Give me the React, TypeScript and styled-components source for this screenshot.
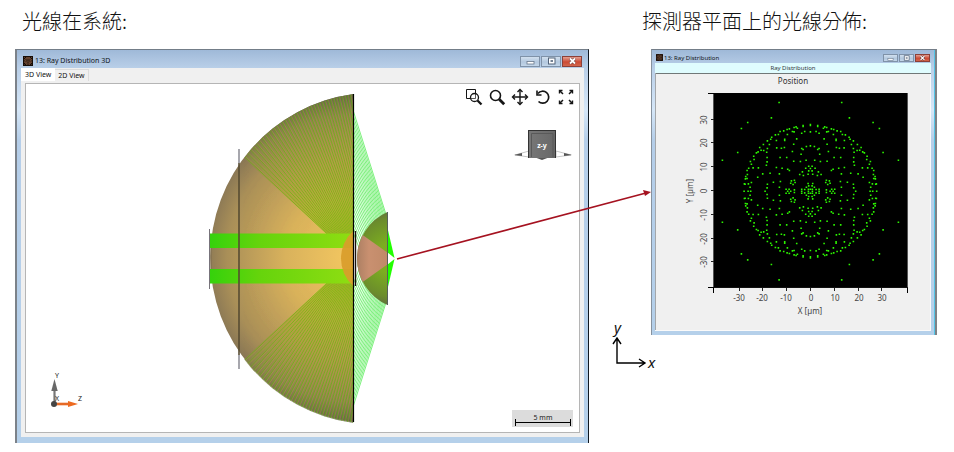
import React from "react";
import styled, { createGlobalStyle, css } from "styled-components";

const Global = createGlobalStyle`
  * { box-sizing: border-box; }
  body { margin: 0; background: #fff; font-family: "Noto Sans", "Open Sans", sans-serif; }
  svg { display: block; }
  text { font-family: "Noto Sans", "Open Sans", sans-serif; }
`;

const Page = styled.main`
  position: relative;
  display: grid;
  grid-template-columns: 574fr 295fr;
  column-gap: 53px;
  align-items: start;
  padding: 7px 17px 9px 15px;
`;

const Figure = styled.section`
  display: flex;
  flex-direction: column;
  min-width: 0;
`;

const Heading = styled.h2<{ $indent?: boolean }>`
  margin: 0;
  padding-left: ${(p) => (p.$indent ? "7px" : "0")};
  height: 42px;
  font: 300 20px/28px "Noto Sans CJK TC", sans-serif;
  color: #111;
  white-space: nowrap;
`;

const Window = styled.div<{ $small?: boolean }>`
  display: flex;
  flex-direction: column;
  border-top: 1px solid #737d88;
  background: linear-gradient(#9fb9d8 0, #b9cfe8 18px, #d6e7f8 60px, #b5cee9 90px, #b5d0ea 100%);
  ${(p) =>
    p.$small
      ? css`
          margin-left: 9px;
          border-left: 1px solid #87929e;
          border-right: 2px solid #7d8287;
          padding: 0 4px 4px 3px;
          box-shadow: inset -1px 0 #55c6e8;
        `
      : css`
          border-left: 2px solid #7c8289;
          border-right: 1px solid #101820;
          padding: 0 4px 6px;
        `}
`;

const TitleBar = styled.header<{ $small?: boolean }>`
  display: flex;
  align-items: center;
  gap: ${(p) => (p.$small ? "1px" : "2px")};
  height: ${(p) => (p.$small ? "13px" : "18px")};
  padding: ${(p) => (p.$small ? "2px 1px 0" : "4px 2px 0")};
  margin: 0;
`;

const Title = styled.h3<{ $small?: boolean }>`
  flex: 1;
  margin: 0;
  font-size: ${(p) => (p.$small ? "6px" : "7px")};
  line-height: 10px;
  font-weight: 400;
  color: #101418;
  white-space: nowrap;
`;

const WindowButtons = styled.div`
  display: flex;
  gap: 1px;
`;

const WindowButton = styled.button<{ $small?: boolean; $close?: boolean }>`
  display: grid;
  place-items: center;
  width: ${(p) => (p.$small ? "15px" : "20px")};
  height: ${(p) => (p.$small ? "8px" : "11px")};
  padding: 0;
  border: 1px solid ${(p) => (p.$close ? "#8c4038" : "#7f92a8")};
  background: ${(p) =>
    p.$close
      ? "linear-gradient(#e3a092, #cc4a34 55%, #d2664c)"
      : "linear-gradient(#d2e0ef, #b3c8de 55%, #c3d6e9)"};
`;

const Panel = styled.div`
  background: #f0f0f0;
`;

const Tabs = styled.div`
  display: flex;
  align-items: flex-end;
  height: 13px;
`;

const Tab = styled.button<{ $active?: boolean }>`
  height: ${(p) => (p.$active ? "13px" : "12px")};
  padding: ${(p) => (p.$active ? "0 4px" : "0 3px")};
  border: 0 solid #dcdcdc;
  border-width: ${(p) => (p.$active ? "0" : "1px 1px 0 0")};
  background: ${(p) => (p.$active ? "#fff" : "#f0f0f0")};
  color: #111;
  font: 7px/11px "Noto Sans", sans-serif;
`;

const Canvas = styled.div`
  position: relative;
  margin: 0;
  border: 1px solid #b5b5b5;
  background: #fff;
`;

const TabBody = styled.div`
  padding: 2px 4px 4px;
`;

const Toolbar = styled.div`
  position: absolute;
  top: 4px;
  right: 4px;
  display: flex;
  gap: 5px;
`;

const Tool = styled.button`
  width: 18px;
  height: 18px;
  padding: 0;
  border: 0;
  background: none;
`;

const Caption = styled.div`
  height: 10px;
  background: #dffcfe;
  color: #30383c;
  font-size: 6px;
  line-height: 10px;
  text-align: center;
`;

const Drawing = styled.svg`
  width: 100%;
  height: auto;
`;

const Annotation = styled.svg`
  position: absolute;
  top: 0;
  left: 0;
  width: 100%;
  height: auto;
  pointer-events: none;
`;

function AppIcon({ size }: { size: number }) {
  return (
    <svg width={size} height={size} viewBox="0 0 10 10">
      <rect width="10" height="10" fill="#160d08" />
      <path
        d="M1 1 9 9M9 1 1 9M5 1 9 5 5 9 1 5zM3 1 9 7M1 3 7 9M7 1 1 7M9 3 3 9"
        stroke="#b87a58"
        strokeWidth="0.7"
        strokeDasharray="1 0.8"
        fill="none"
      />
    </svg>
  );
}

function Controls({ small }: { small?: boolean }) {
  const w = small ? 7 : 9;
  return (
    <WindowButtons>
      <WindowButton $small={small} aria-label="Minimize">
        <svg width={w} height={w - 1} viewBox="0 0 9 8">
          <rect x="1" y="4.5" width="7" height="2.5" fill="#fff" stroke="#68788c" strokeWidth=".8" />
        </svg>
      </WindowButton>
      <WindowButton $small={small} aria-label="Maximize">
        <svg width={w} height={w - 1} viewBox="0 0 9 8">
          <rect x="1.5" y="1" width="6.5" height="6" fill="#fff" stroke="#53647a" />
          <rect x="3.5" y="3.2" width="2.5" height="1.6" fill="#53647a" />
        </svg>
      </WindowButton>
      <WindowButton $small={small} $close aria-label="Close">
        <svg width={w} height={w - 1} viewBox="0 0 9 8">
          <path d="M2 1.5 7 6.5M7 1.5 2 6.5" stroke="#6b3a38" strokeWidth="3" />
          <path d="M2 1.5 7 6.5M7 1.5 2 6.5" stroke="#fff" strokeWidth="1.8" />
        </svg>
      </WindowButton>
    </WindowButtons>
  );
}

const tools = [
  {
    label: "Zoom to region",
    art: (
      <>
        <path d="M5 10.5H1.5V1.5h9V5" strokeWidth="1" />
        <path d="M5 10.5h5.5V5" strokeWidth=".7" />
        <circle cx="9.5" cy="9.5" r="4" strokeWidth="1.3" />
        <path d="m12.5 12.500 4 4" strokeWidth="2.3" />
      </>
    ),
  },
  {
    label: "Zoom",
    art: (
      <>
        <circle cx="7.5" cy="7.5" r="5" strokeWidth="1.6" />
        <path d="m11.200 11.200 5 5" strokeWidth="2.8" />
      </>
    ),
  },
  {
    label: "Pan",
    art: (
      <>
        <path d="M9 2v14M2 9h14" strokeWidth="1.4" />
        <path d="M6.500 4 9 1.500 11.500 4M6.500 14 9 16.500 11.500 14M4 6.500 1.500 9 4 11.500M14 6.500 16.500 9 14 11.500" strokeWidth="1.4" />
      </>
    ),
  },
  {
    label: "Reset rotation",
    art: (
      <>
        <path d="M4 5.500A6 6 0 1 1 4.500 13.500" strokeWidth="1.7" />
        <path d="M3 2.500v4.500h4.500" strokeWidth="1.6" />
      </>
    ),
  },
  {
    label: "Fit to window",
    art: (
      <>
        <path d="m3 3 3 3M15 3 12 6M3 15 6 12M15 15 12 12" strokeWidth="1.5" />
        <path d="M2.500 5.500V2.500h3M12.500 2.500h3v3M2.500 12.500v3h3M12.500 15.500h3v-3" strokeWidth="1.4" />
      </>
    ),
  },
];

const AXIS_Y = 258;

function innerRays() {
  const out: string[] = [];
  const n = 38;
  for (let i = 0; i <= n; i++) {
    const t = i / n;
    const x = 245 + (353 - 245) * t;
    const dy = Math.sqrt(165.5 ** 2 - (376 - x) ** 2);
    out.push(`M${x.toFixed(1)} ${(AXIS_Y - dy).toFixed(1)}L${(327 + 50 * t).toFixed(1)} 234`);
  }
  return out.join("");
}

function outerRays() {
  const out: string[] = [];
  const n = 26;
  for (let i = 0; i <= n; i++) {
    const t = i / n;
    const y0 = 110 + 122 * t;
    const x1 = 385 - 27 * t;
    const y1 = AXIS_Y - Math.sqrt(Math.max(0, 50.7 ** 2 - (407.2 - x1) ** 2));
    out.push(`M353 ${y0.toFixed(1)}L${(x1 + 1).toFixed(1)} ${(y1 + 2).toFixed(1)}`);
  }
  return out.join("");
}

/* One half of the ray bundle; the lower half is its reflection in the optical axis. */
function HalfBundle() {
  return (
    <>
      <g clipPath="url(#bigLens)">
        <path d="M327 234 245 159 200 80h153v154z" fill="url(#fan)" />
        <path d={innerRays()} stroke="#5cba08" strokeWidth="0.8" opacity="0.7" />
        <path d={innerRays()} stroke="#cf8468" strokeWidth="0.8" opacity="0.4" transform="translate(1 0)" />
      </g>
      <rect x="210" y="233.5" width="143" height="14.5" fill="url(#beam)" />
      <path d={outerRays()} stroke="#25e625" strokeWidth="0.6" fill="none" />
      <path d="M387 226 394.5 258 387 252z" fill="#22ff00" />
    </>
  );
}

function RayScene() {
  return (
    <Drawing viewBox="26 84 553 348" role="img" aria-label="Ray Distribution 3D">
      <defs>
        <clipPath id="bigLens">
          <path d="M353.5 94A165.5 165.5 0 0 0 353.5 422z" />
        </clipPath>
        <clipPath id="smallLens">
          <path d="M387.5 212A50.7 50.7 0 0 0 387.5 305z" />
        </clipPath>
        <radialGradient id="glass" gradientUnits="userSpaceOnUse" cx="353" cy="258" r="168">
          <stop offset="0" stopColor="#f5c860" />
          <stop offset=".4" stopColor="#d9b25c" />
          <stop offset=".75" stopColor="#a98f58" />
          <stop offset="1" stopColor="#6b6052" />
        </radialGradient>
        <radialGradient id="fan" gradientUnits="userSpaceOnUse" cx="353" cy="258" r="168">
          <stop offset=".15" stopColor="#98cc08" stopOpacity=".95" />
          <stop offset=".35" stopColor="#a8b922" stopOpacity=".8" />
          <stop offset=".6" stopColor="#a7a23a" stopOpacity=".75" />
          <stop offset=".85" stopColor="#8c8c46" stopOpacity=".7" />
          <stop offset="1" stopColor="#55603f" stopOpacity=".8" />
        </radialGradient>
        <linearGradient id="beam">
          <stop offset="0" stopColor="#35d20c" />
          <stop offset=".35" stopColor="#66d40c" />
          <stop offset="1" stopColor="#8fdd12" />
        </linearGradient>
        <radialGradient id="smallGreen" gradientUnits="userSpaceOnUse" cx="392" cy="258" r="52">
          <stop offset=".3" stopColor="#7cad20" />
          <stop offset=".75" stopColor="#6b8c2c" />
          <stop offset="1" stopColor="#5a6344" />
        </radialGradient>
        <linearGradient id="salmon">
          <stop offset="0" stopColor="#9c765c" />
          <stop offset=".5" stopColor="#c99070" />
          <stop offset="1" stopColor="#c08a68" />
        </linearGradient>
        <linearGradient id="cube">
          <stop offset="0" stopColor="#777" />
          <stop offset="1" stopColor="#686868" />
        </linearGradient>
      </defs>

      <path d="M353.5 94A165.5 165.5 0 0 0 353.5 422z" fill="url(#glass)" />
      <HalfBundle />
      <g transform="matrix(1 0 0 -1 0 517)">
        <HalfBundle />
      </g>
      <path d="M353 231A37.5 37.5 0 0 0 353 286z" fill="#d99c2b" opacity=".92" />
      <path d="M239 149V163M239 355V369" stroke="#92929a" strokeWidth="1.6" />
      <path d="M239 163V355" stroke="#574c32" strokeWidth="1.6" />
      <path d="M209.5 229V289" stroke="#77737b" />
      <path d="M211 248v21" stroke="#7c6d50" />
      <path d="M353.5 94V422" stroke="#000" strokeWidth="1.2" />
      <path d="M355.5 231V286" stroke="#1b120c" strokeWidth="1.4" />

      <g clipPath="url(#smallLens)">
        <rect x="355" y="210" width="33" height="97" fill="url(#smallGreen)" />
        <path d="M350 226 388 253v11L350 291z" fill="url(#salmon)" />
      </g>
      <path d="M387.5 212V305" stroke="#55605a" strokeWidth="1" />

      <g>
        <path d="m515 155 14-4v6zM571 155l-15-4v6z" fill="#fff" stroke="#aaa" strokeWidth=".7" />
        <path d="m514 155 8-2v3zM572 155l-8-2v3zM534 157h16l-8 3z" fill="#555" />
        <path d="M528 130h28v28h-28z" fill="#333" />
        <rect x="529" y="131" width="26" height="27" fill="url(#cube)" />
        <path d="M531.5 157V133.5H553V157" fill="none" stroke="#595959" />
        <text x="542" y="148" fontSize="7" fontWeight="700" textAnchor="middle" fill="#fff">z-y</text>
      </g>

      <g>
        <path d="M54.5 403V388" stroke="#777" strokeWidth="2.2" />
        <path d="m54.500 379 3.200 12h-6.400z" fill="#686868" />
        <path d="M54 404H69" stroke="#e66a26" strokeWidth="2.6" />
        <path d="m78 404-10-3v6z" fill="#ed6a20" />
        <circle cx="54" cy="404" r="3" fill="#444" />
        <text x="55" y="378" fontSize="7" fill="#222">Y</text>
        <text x="55" y="401" fontSize="7" fill="#222">X</text>
        <text x="78" y="401" fontSize="7" fill="#222">Z</text>
      </g>

      <g>
        <rect x="512" y="410" width="61" height="17" fill="#dcdcdc" />
        <path d="M515.5 419v7M570.5 419v7M515 422.5h56" stroke="#000" />
        <text x="543" y="420" fontSize="7" textAnchor="middle" fill="#222">5 mm</text>
      </g>
    </Drawing>
  );
}

/* Ray hits of the upper right quadrant, in thirds of a plot unit from the centre. */
const hits: [number, number][] = [
  [94, 266], [117, 220], [188, 206], [207, 188], [218, 116], [264, 93],
  [0, 197], [22, 197], [0, 200], [22, 194], [43, 193], [39, 189], [49, 191], [63, 187], [70, 185], [80, 181],
  [91, 179], [96, 170], [105, 169], [116, 162], [119, 156], [129, 151], [123, 140], [141, 140],
  [152, 131], [148, 123], [140, 122], [157, 118], [162, 115], [170, 105], [169, 95], [180, 89],
  [177, 81], [185, 69], [190, 62], [189, 50], [194, 44], [195, 37], [190, 38], [196, 21],
  [186, 22], [199, 0], [187, 0], [179, 0], [181, 12], [177, 26], [198, 22],
  [0, 178], [17, 179], [26, 174], [49, 178], [54, 179], [69, 170], [77, 156], [77, 152], [41, 157],
  [102, 152], [50, 141], [129, 128], [78, 131], [87, 129], [101, 130], [0, 136], [12, 134],
  [22, 125], [26, 128], [54, 119], [28, 111], [131, 117], [71, 101], [91, 101], [130, 101],
  [130, 88], [132, 78], [13, 93], [30, 89], [50, 90], [85, 69], [102, 71], [68, 66], [63, 62],
  [5, 75], [5, 61], [0, 68], [14, 69], [24, 58], [32, 50], [21, 47], [7, 51],
  [143, 52], [121, 54], [93, 52], [156, 70], [172, 70], [158, 42], [48, 33], [57, 31],
  [46, 26], [59, 24], [52, 20], [90, 29], [111, 27], [129, 21], [130, 10], [136, 0],
  [93, 12], [64, 6], [73, 6], [68, 0], [59, 0], [48, 4], [26, 6], [26, 0],
  [7, 23], [12, 12], [6, 6], [0, 6], [6, 0], [17, 5], [5, 16],
];

function hitPath() {
  const out: string[] = [];
  hits.forEach(([a, b]) => {
    const xs = a ? [a, -a] : [0];
    const ys = b ? [b, -b] : [0];
    xs.forEach((x) =>
      ys.forEach((y) => {
        const px = (809.6 + x / 3).toFixed(1);
        const py = (190.4 - y / 3).toFixed(1);
        out.push(`M${px} ${py}h1.600v1.600h-1.600z`);
      }),
    );
  });
  return out.join("");
}

const ticks = [-30, -20, -10, 0, 10, 20, 30];

function SpotPlot() {
  return (
    <Drawing viewBox="655 73 276 258" role="img" aria-label="Position">
      <path d="M655 73.5H931" stroke="#707878" />
      <path d="M655.5 73V330" stroke="#a4a7aa" />
      <path d="M655 330.5H931M930.5 74V331" stroke="#fafafa" />
      <text x="793" y="84" fontSize="8" textAnchor="middle" fill="#333">Position</text>
      <rect x="713" y="93" width="195" height="195" fill="#000" />
      <path d="M713.5 93V293M907.5 93V288" stroke="#555" />
      <path d="M713 287.5H908" stroke="#111" />
      <path d="M708 93.5h6M708 287.5h6M713.5 288v5M907.5 288v5" stroke="#000" />
      {ticks.map((t) => (
        <g key={t} fontSize="8" fill="#444" textAnchor="middle">
          <path d={`M${Math.round(810 + t * 2.38)}.5 288v3M711 ${Math.round(190 - t * 2.38)}.5h3`} stroke="#222" />
          <text x={Math.round(811 + t * 2.38) - (t < 0 ? 1 : 0)} y="301">{t}</text>
          <text transform={`translate(707 ${Math.round(191 - t * 2.38)}) rotate(-90)`}>{t}</text>
        </g>
      ))}
      <text x="810" y="314" fontSize="8" textAnchor="middle" fill="#444">X [µm]</text>
      <text transform="translate(693 191) rotate(-90)" fontSize="8" textAnchor="middle" fill="#444">Y [µm]</text>
      <path d={hitPath()} fill="#2cf500" />
    </Drawing>
  );
}

export default function App() {
  return (
    <>
      <Global />
      <Page>
        <Figure>
          <Heading $indent>光線在系統:</Heading>
          <Window>
            <TitleBar>
              <AppIcon size={10} />
              <Title>13: Ray Distribution 3D</Title>
              <Controls />
            </TitleBar>
            <Panel>
              <Tabs role="tablist">
                <Tab role="tab" aria-selected="true" $active>3D View</Tab>
                <Tab role="tab" aria-selected="false">2D View</Tab>
              </Tabs>
              <TabBody>
                <Canvas>
                  <RayScene />
                  <Toolbar>
                    {tools.map((t) => (
                      <Tool key={t.label} aria-label={t.label}>
                        <svg width="18" height="18" viewBox="0 0 18 18" fill="none" stroke="#151515">
                          {t.art}
                        </svg>
                      </Tool>
                    ))}
                  </Toolbar>
                </Canvas>
              </TabBody>
            </Panel>
          </Window>
        </Figure>

        <Figure>
          <Heading>探測器平面上的光線分佈:</Heading>
          <Window $small>
            <TitleBar $small>
              <AppIcon size={7} />
              <Title $small>13: Ray Distribution</Title>
              <Controls small />
            </TitleBar>
            <Panel>
              <Caption>Ray Distribution</Caption>
              <SpotPlot />
            </Panel>
          </Window>
        </Figure>

        <Annotation viewBox="0 0 954 452" aria-hidden="true">
          <path d="M397 259 646 193" stroke="#a51220" strokeWidth="1.6" />
          <path d="m651 192-8-2 2 6z" fill="#a51220" />
          <path d="M617 339v24H644M613 344l4-6 4 6M639 359l6 4-6 4" fill="none" stroke="#000" strokeWidth="1.4" />
          <text x="614" y="333" fontSize="15" fontStyle="italic" fill="#111">y</text>
          <text x="648" y="368" fontSize="15" fontStyle="italic" fill="#111">x</text>
        </Annotation>
      </Page>
    </>
  );
}
